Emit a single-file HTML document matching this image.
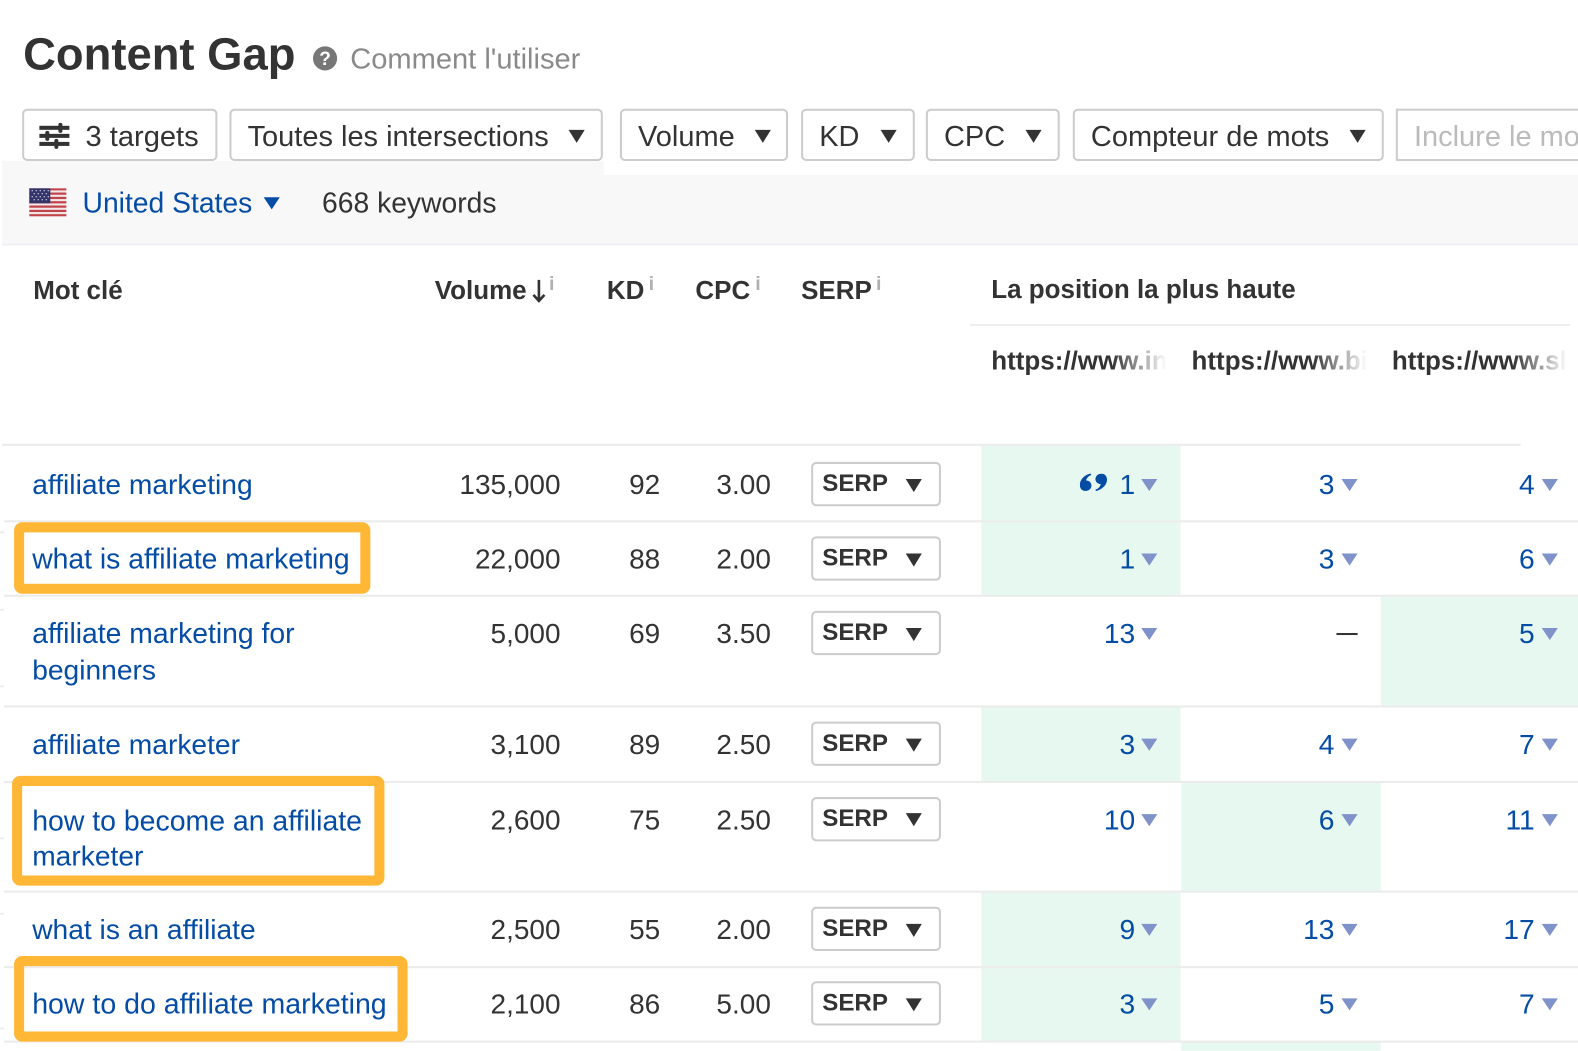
<!DOCTYPE html>
<html lang="fr"><head><meta charset="utf-8"><title>Content Gap</title>
<style>
html,body{margin:0;padding:0;width:1578px;height:1050px;overflow:hidden;background:#fff}
#p{position:absolute;left:0;top:0;width:1568px;height:1044px;transform:scale(1.00638);transform-origin:0 0;font-family:"Liberation Sans",Arial,sans-serif;font-size:28px;color:#333;overflow:hidden}
#p div,#p span.a{position:absolute;box-sizing:border-box}
.t{white-space:nowrap;line-height:40px;height:40px}
.k{color:#054ca5;left:32px;font-size:28.1px;margin-top:.5px}
.r{width:200px;text-align:right;font-size:27.8px;margin-top:1px}
.p{width:100px;text-align:right;color:#054ca5;margin-top:1px;margin-left:1px}
.h{font-weight:bold;font-size:25.8px;color:#333;margin-top:1px}
.s{height:2px;background:#ebebeb;left:4px;right:0}
.g{background:#e6f8ef;width:198px}
.b{border:2px solid #ccc;border-radius:5px;background:#fff;height:52px;top:108px}
.b+.t{font-size:28.8px;margin-top:.5px}
.sb{left:806px;width:129px;height:44px;border:2px solid #ccc;border-radius:5px;background:#fff}
.sl{left:817px;font-weight:bold;font-size:24px;margin-top:1px}
.c{width:0;height:0;border-left:8px solid transparent;border-right:8px solid transparent;border-top:13px solid #333}
.sc{margin-left:-1px}
.u{width:0;height:0;border-left:8px solid transparent;border-right:8px solid transparent;border-top:12px solid #7f92c9}
.i{font-size:19.5px;font-weight:bold;color:#b0b0b0;line-height:20px;height:20px;top:271.500px}
.o{border:10px solid #ffb735;border-radius:8px}
.tick{left:0;width:4px;height:2px;background:#eee}
.f{width:60px;height:40px;top:339px;background:linear-gradient(90deg,rgba(255,255,255,0),#fff 90%)}
</style></head><body><div id="p">

<div style="left:2px;top:160px;width:598px;height:20px;background:#f8f8f8"></div>
<div style="left:2px;top:174px;right:0;height:69px;background:#f8f8f8"></div>
<div style="left:2px;top:242px;right:0;height:2px;background:#eef0f4"></div>

<div class="t" style="left:23px;top:28px;height:52px;line-height:52px;font-size:45.1px;font-weight:bold">Content Gap</div>
<svg style="position:absolute;left:311px;top:46px" width="24" height="24" viewBox="0 0 24 24"><circle cx="12" cy="12" r="12" fill="#777"/><text x="12" y="18.500" text-anchor="middle" font-family="Liberation Sans" font-weight="bold" font-size="19" fill="#fff">?</text></svg>
<div class="t" style="left:348px;top:38.500px;color:#8a8a8a;font-size:28.9px">Comment l'utiliser</div>

<div class="b" style="left:22px;width:194px"></div>
<svg style="position:absolute;left:39px;top:122px" width="30" height="26" viewBox="0 0 30 26"><g fill="#333"><rect x="0" y="3" width="30" height="4"/><rect x="0" y="11" width="30" height="4"/><rect x="0" y="19" width="30" height="4"/><rect x="19" y="0" width="4" height="10" rx="2"/><rect x="6" y="8" width="4" height="10" rx="2"/><rect x="15" y="16" width="4" height="10" rx="2"/></g></svg>
<div class="t" style="left:85px;top:115.500px;font-size:28.9px">3 targets</div>

<div class="b" style="left:228px;width:371px"></div>
<div class="t" style="left:246px;top:115px">Toutes les intersections</div>
<div class="c" style="left:565px;top:129px"></div>

<div class="b" style="left:616px;width:167px"></div>
<div class="t" style="left:634px;top:115px">Volume</div>
<div class="c" style="left:750px;top:129px"></div>

<div class="b" style="left:796px;width:113px"></div>
<div class="t" style="left:814px;top:115px">KD</div>
<div class="c" style="left:875px;top:129px"></div>

<div class="b" style="left:920px;width:133px"></div>
<div class="t" style="left:938px;top:115px">CPC</div>
<div class="c" style="left:1019px;top:129px"></div>

<div class="b" style="left:1066px;width:309px"></div>
<div class="t" style="left:1084px;top:115px">Compteur de mots</div>
<div class="c" style="left:1341px;top:129px"></div>

<div class="b" style="left:1387px;width:240px;border-radius:0"></div>
<div class="t" style="left:1405px;top:115px;color:#bbb">Inclure le mots</div>

<svg style="position:absolute;left:29px;top:187px" width="37" height="28" viewBox="0 0 37 28">
<rect width="37" height="28" fill="#f3e9e9"/>
<g fill="#c0444c"><rect y="0" width="37" height="2.2"/><rect y="4.3" width="37" height="2.2"/><rect y="8.6" width="37" height="2.2"/><rect y="12.9" width="37" height="2.2"/><rect y="17.2" width="37" height="2.2"/><rect y="21.5" width="37" height="2.2"/><rect y="25.8" width="37" height="2.2"/></g>
<rect width="21" height="15" fill="#33356a"/>
<g fill="#c8cade"><circle cx="3" cy="2.5" r=".7"/><circle cx="7" cy="2.5" r=".7"/><circle cx="11" cy="2.5" r=".7"/><circle cx="15" cy="2.5" r=".7"/><circle cx="19" cy="2.5" r=".7"/><circle cx="5" cy="5.5" r=".7"/><circle cx="9" cy="5.5" r=".7"/><circle cx="13" cy="5.5" r=".7"/><circle cx="17" cy="5.5" r=".7"/><circle cx="3" cy="8.5" r=".7"/><circle cx="7" cy="8.5" r=".7"/><circle cx="11" cy="8.5" r=".7"/><circle cx="15" cy="8.5" r=".7"/><circle cx="19" cy="8.5" r=".7"/><circle cx="5" cy="11.5" r=".7"/><circle cx="9" cy="11.5" r=".7"/><circle cx="13" cy="11.5" r=".7"/><circle cx="17" cy="11.5" r=".7"/></g>
</svg>
<div class="t" style="left:82px;top:181.500px;color:#054ca5;font-size:28.1px">United States</div>
<div class="u" style="left:262px;top:196px;border-top-color:#054ca5"></div>
<div class="t" style="left:320px;top:181.500px;font-size:28.1px">668 keywords</div>

<div class="t h" style="left:33px;top:268px">Mot clé</div>
<div class="t h" style="left:432px;top:268px">Volume</div>
<svg style="position:absolute;left:529px;top:278px" width="13" height="23" viewBox="0 0 13 23"><path d="M6.5 0V20M1 15L6.5 21L12 15" fill="none" stroke="#333" stroke-width="2.6"/></svg>
<div class="t i" style="left:545.500px">i</div>
<div class="t h" style="left:603px;top:268px">KD</div>
<div class="t i" style="left:644.500px">i</div>
<div class="t h" style="left:691px;top:268px">CPC</div>
<div class="t i" style="left:750.500px">i</div>
<div class="t h" style="left:796px;top:268px">SERP</div>
<div class="t i" style="left:870.500px">i</div>
<div class="t h" style="left:985px;top:267px">La position la plus haute</div>
<div style="left:964px;top:322px;width:596px;height:2px;background:#eeeeee"></div>

<div class="t h" style="left:985px;top:338px;width:176px;overflow:hidden">https://www.inshopify</div>
<div class="f" style="left:1105px"></div>
<div class="t h" style="left:1184px;top:338px;width:176px;overflow:hidden">https://www.bigcommerce</div>
<div class="f" style="left:1304px"></div>
<div class="t h" style="left:1383px;top:338px;width:176px;overflow:hidden">https://www.shopify</div>
<div class="f" style="left:1503px"></div>

<div class="g" style="left:975px;top:443px;height:74px"></div>
<div class="g" style="left:975px;top:519px;height:72px"></div>
<div class="g" style="left:1372px;top:593px;height:108px;width:210px"></div>
<div class="g" style="left:975px;top:703px;height:73px"></div>
<div class="g" style="left:1173.500px;top:778px;height:107px"></div>
<div class="g" style="left:975px;top:887px;height:73px"></div>
<div class="g" style="left:975px;top:962px;height:72px"></div>
<div class="g" style="left:1173.500px;top:1036px;height:10px"></div>

<div class="s" style="top:441px;left:2px;right:auto;width:1509px"></div>
<div class="s" style="top:517px"></div>
<div class="s" style="top:591px"></div>
<div class="s" style="top:701px"></div>
<div class="s" style="top:776px"></div>
<div class="s" style="top:885px"></div>
<div class="s" style="top:960px"></div>
<div class="s" style="top:1034px"></div>
<div class="tick" style="top:528px"></div>
<div class="tick" style="top:605px"></div>
<div class="tick" style="top:681px"></div>
<div class="tick" style="top:832px"></div>
<div class="tick" style="top:907px"></div>
<div class="tick" style="top:1021px"></div>

<div class="o" style="left:14px;top:519px;width:354px;height:71px"></div>
<div class="o" style="left:12px;top:771px;width:370px;height:109px"></div>
<div class="o" style="left:14px;top:950px;width:391px;height:85px"></div>

<!-- row 1 -->
<div class="t k" style="top:461px;font-size:28.02px">affiliate marketing</div>
<div class="t r" style="left:357px;top:461px">135,000</div>
<div class="t r" style="left:456px;top:461px">92</div>
<div class="t r" style="left:566px;top:461px">3.00</div>
<div class="sb" style="top:459px"></div><div class="t sl" style="top:460px">SERP</div><div class="c sc" style="left:901px;top:476px"></div>
<svg style="position:absolute;left:1073px;top:470px" width="27" height="19" viewBox="0 0 27 19"><path fill="#054ca5" d="M10.500 0.500C4.500 2 0 6.500 0 12C0 15.500 2.300 17.800 5.500 17.800C9 17.800 11.500 15.500 11.500 12.500C11.500 9.500 9.200 7.500 6.200 7.500C6.800 5 8.500 3 11.500 2Z"/><path fill="#054ca5" d="M16 18C22 16.500 27 12 27 6.500C27 3 24.700 0.700 21.500 0.700C18 0.700 15.500 3 15.500 6C15.500 9 17.800 11 20.800 11C20.200 13.500 18.500 15.500 15.500 16.500Z"/></svg>
<div class="t p" style="left:1027px;top:461px">1</div><div class="u" style="left:1134px;top:476px"></div>
<div class="t p" style="left:1225px;top:461px">3</div><div class="u" style="left:1333px;top:476px"></div>
<div class="t p" style="left:1424px;top:461px">4</div><div class="u" style="left:1532px;top:476px"></div>

<!-- row 2 -->
<div class="t k" style="top:535px;font-size:28.15px">what is affiliate marketing</div>
<div class="t r" style="left:357px;top:535px">22,000</div>
<div class="t r" style="left:456px;top:535px">88</div>
<div class="t r" style="left:566px;top:535px">2.00</div>
<div class="sb" style="top:533px"></div><div class="t sl" style="top:534px">SERP</div><div class="c sc" style="left:901px;top:550px"></div>
<div class="t p" style="left:1027px;top:535px">1</div><div class="u" style="left:1134px;top:550px"></div>
<div class="t p" style="left:1225px;top:535px">3</div><div class="u" style="left:1333px;top:550px"></div>
<div class="t p" style="left:1424px;top:535px">6</div><div class="u" style="left:1532px;top:550px"></div>

<!-- row 3 -->
<div class="t k" style="top:609px;font-size:28.15px">affiliate marketing for</div>
<div class="t k" style="top:645.500px;font-size:28px">beginners</div>
<div class="t r" style="left:357px;top:609px">5,000</div>
<div class="t r" style="left:456px;top:609px">69</div>
<div class="t r" style="left:566px;top:609px">3.50</div>
<div class="sb" style="top:607px"></div><div class="t sl" style="top:608px">SERP</div><div class="c sc" style="left:901px;top:624px"></div>
<div class="t p" style="left:1027px;top:609px">13</div><div class="u" style="left:1134px;top:624px"></div>
<div style="left:1328px;top:629px;width:21px;height:2px;background:#333"></div>
<div class="t p" style="left:1424px;top:609px">5</div><div class="u" style="left:1532px;top:624px"></div>

<!-- row 4 -->
<div class="t k" style="top:719px;font-size:28px">affiliate marketer</div>
<div class="t r" style="left:357px;top:719px">3,100</div>
<div class="t r" style="left:456px;top:719px">89</div>
<div class="t r" style="left:566px;top:719px">2.50</div>
<div class="sb" style="top:717px"></div><div class="t sl" style="top:718px">SERP</div><div class="c sc" style="left:901px;top:734px"></div>
<div class="t p" style="left:1027px;top:719px">3</div><div class="u" style="left:1134px;top:734px"></div>
<div class="t p" style="left:1225px;top:719px">4</div><div class="u" style="left:1333px;top:734px"></div>
<div class="t p" style="left:1424px;top:719px">7</div><div class="u" style="left:1532px;top:734px"></div>

<!-- row 5 -->
<div class="t k" style="top:794px;font-size:28.25px">how to become an affiliate</div>
<div class="t k" style="top:830px;font-size:28px">marketer</div>
<div class="t r" style="left:357px;top:794px">2,600</div>
<div class="t r" style="left:456px;top:794px">75</div>
<div class="t r" style="left:566px;top:794px">2.50</div>
<div class="sb" style="top:792px"></div><div class="t sl" style="top:793px">SERP</div><div class="c sc" style="left:901px;top:808px"></div>
<div class="t p" style="left:1027px;top:794px">10</div><div class="u" style="left:1134px;top:809px"></div>
<div class="t p" style="left:1225px;top:794px">6</div><div class="u" style="left:1333px;top:809px"></div>
<div class="t p" style="left:1424px;top:794px">11</div><div class="u" style="left:1532px;top:809px"></div>

<!-- row 6 -->
<div class="t k" style="top:903px;font-size:28px">what is an affiliate</div>
<div class="t r" style="left:357px;top:903px">2,500</div>
<div class="t r" style="left:456px;top:903px">55</div>
<div class="t r" style="left:566px;top:903px">2.00</div>
<div class="sb" style="top:901px"></div><div class="t sl" style="top:902px">SERP</div><div class="c sc" style="left:901px;top:918px"></div>
<div class="t p" style="left:1027px;top:903px">9</div><div class="u" style="left:1134px;top:918px"></div>
<div class="t p" style="left:1225px;top:903px">13</div><div class="u" style="left:1333px;top:918px"></div>
<div class="t p" style="left:1424px;top:903px">17</div><div class="u" style="left:1532px;top:918px"></div>

<!-- row 7 -->
<div class="t k" style="top:977px;font-size:28.33px">how to do affiliate marketing</div>
<div class="t r" style="left:357px;top:977px">2,100</div>
<div class="t r" style="left:456px;top:977px">86</div>
<div class="t r" style="left:566px;top:977px">5.00</div>
<div class="sb" style="top:975px"></div><div class="t sl" style="top:976px">SERP</div><div class="c sc" style="left:901px;top:992px"></div>
<div class="t p" style="left:1027px;top:977px">3</div><div class="u" style="left:1134px;top:992px"></div>
<div class="t p" style="left:1225px;top:977px">5</div><div class="u" style="left:1333px;top:992px"></div>
<div class="t p" style="left:1424px;top:977px">7</div><div class="u" style="left:1532px;top:992px"></div>

</div></body></html>
